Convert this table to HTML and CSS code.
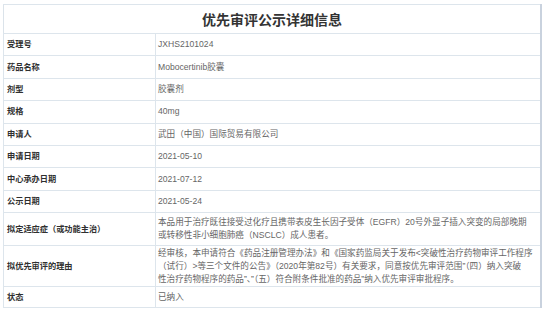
FILE: index.html
```html
<!DOCTYPE html>
<html lang="zh-CN">
<head>
<meta charset="utf-8">
<title>优先审评公示详细信息</title>
<link rel="stylesheet" href="styles.css">
</head>
<body>
<table class="info">
  <colgroup><col class="col-label"><col class="col-value"></colgroup>
  <tr class="title-row"><th colspan="2">优先审评公示详细信息</th></tr>
  <tr><td class="label">受理号</td><td class="value">JXHS2101024</td></tr>
  <tr><td class="label">药品名称</td><td class="value">Mobocertinib胶囊</td></tr>
  <tr><td class="label">剂型</td><td class="value">胶囊剂</td></tr>
  <tr><td class="label">规格</td><td class="value">40mg</td></tr>
  <tr><td class="label">申请人</td><td class="value">武田（中国）国际贸易有限公司</td></tr>
  <tr><td class="label">申请日期</td><td class="value">2021-05-10</td></tr>
  <tr><td class="label">中心承办日期</td><td class="value">2021-07-12</td></tr>
  <tr><td class="label">公示日期</td><td class="value">2021-05-24</td></tr>
  <tr class="multi two"><td class="label">拟定适应症（或功能主治）</td><td class="value">本品用于治疗既往接受过化疗且携带表皮生长因子受体（EGFR）20号外显子插入突变的局部晚期<br>或转移性非小细胞肺癌（NSCLC）成人患者。</td></tr>
  <tr class="multi three"><td class="label">拟优先审评的理由</td><td class="value">经审核，本申请符合《药品注册管理办法》和《国家药监局关于发布&lt;突破性治疗药物审评工作程序<br>（试行）&gt;等三个文件的公告》（2020年第82号）有关要求，同意按优先审评范围”（四）纳入突破<br>性治疗药物程序的药品”、”（五）符合附条件批准的药品”纳入优先审评审批程序。</td></tr>
  <tr class="last"><td class="label">状态</td><td class="value">已纳入</td></tr>
</table>
</body>
</html>
```

FILE: styles.css
```css
html, body {
  margin: 0;
  padding: 0;
  background: #ffffff;
}

body {
  font-family: "Liberation Sans", "Noto Sans CJK SC", sans-serif;
}

.info {
  margin: 4px 0 0 3px;
  width: 539px;
  border-collapse: collapse;
  table-layout: fixed;
  border-top: 1px solid #cfd6dd;
  border-left: 1px solid #dbe3ea;
  border-right: 2px solid #c9d2de;
  border-bottom: 1px solid #dbe3ea;
}

.col-label {
  width: 152px;
}

.col-value {
  width: auto;
}

.info td, .info th {
  border: 1px solid #dde5ec;
  padding: 0;
  vertical-align: middle;
  text-align: left;
}

.title-row th {
  height: 28px;
  text-align: center;
  font-size: 14px;
  font-weight: bold;
  color: #333333;
  border-left: none;
  border-right: none;
}

.info td {
  height: 21.4px;
  line-height: 13px;
}

.label {
  padding-left: 3px !important;
  font-size: 8.2px;
  font-weight: bold;
  color: #2f2f2f;
}

.value {
  padding-left: 2px !important;
  font-size: 8.6px;
  color: #666666;
  white-space: nowrap;
}

.multi.two td {
  height: 32px;
}

.multi.three td {
  height: 40px;
}

.last td {
  height: 20px;
}
```
